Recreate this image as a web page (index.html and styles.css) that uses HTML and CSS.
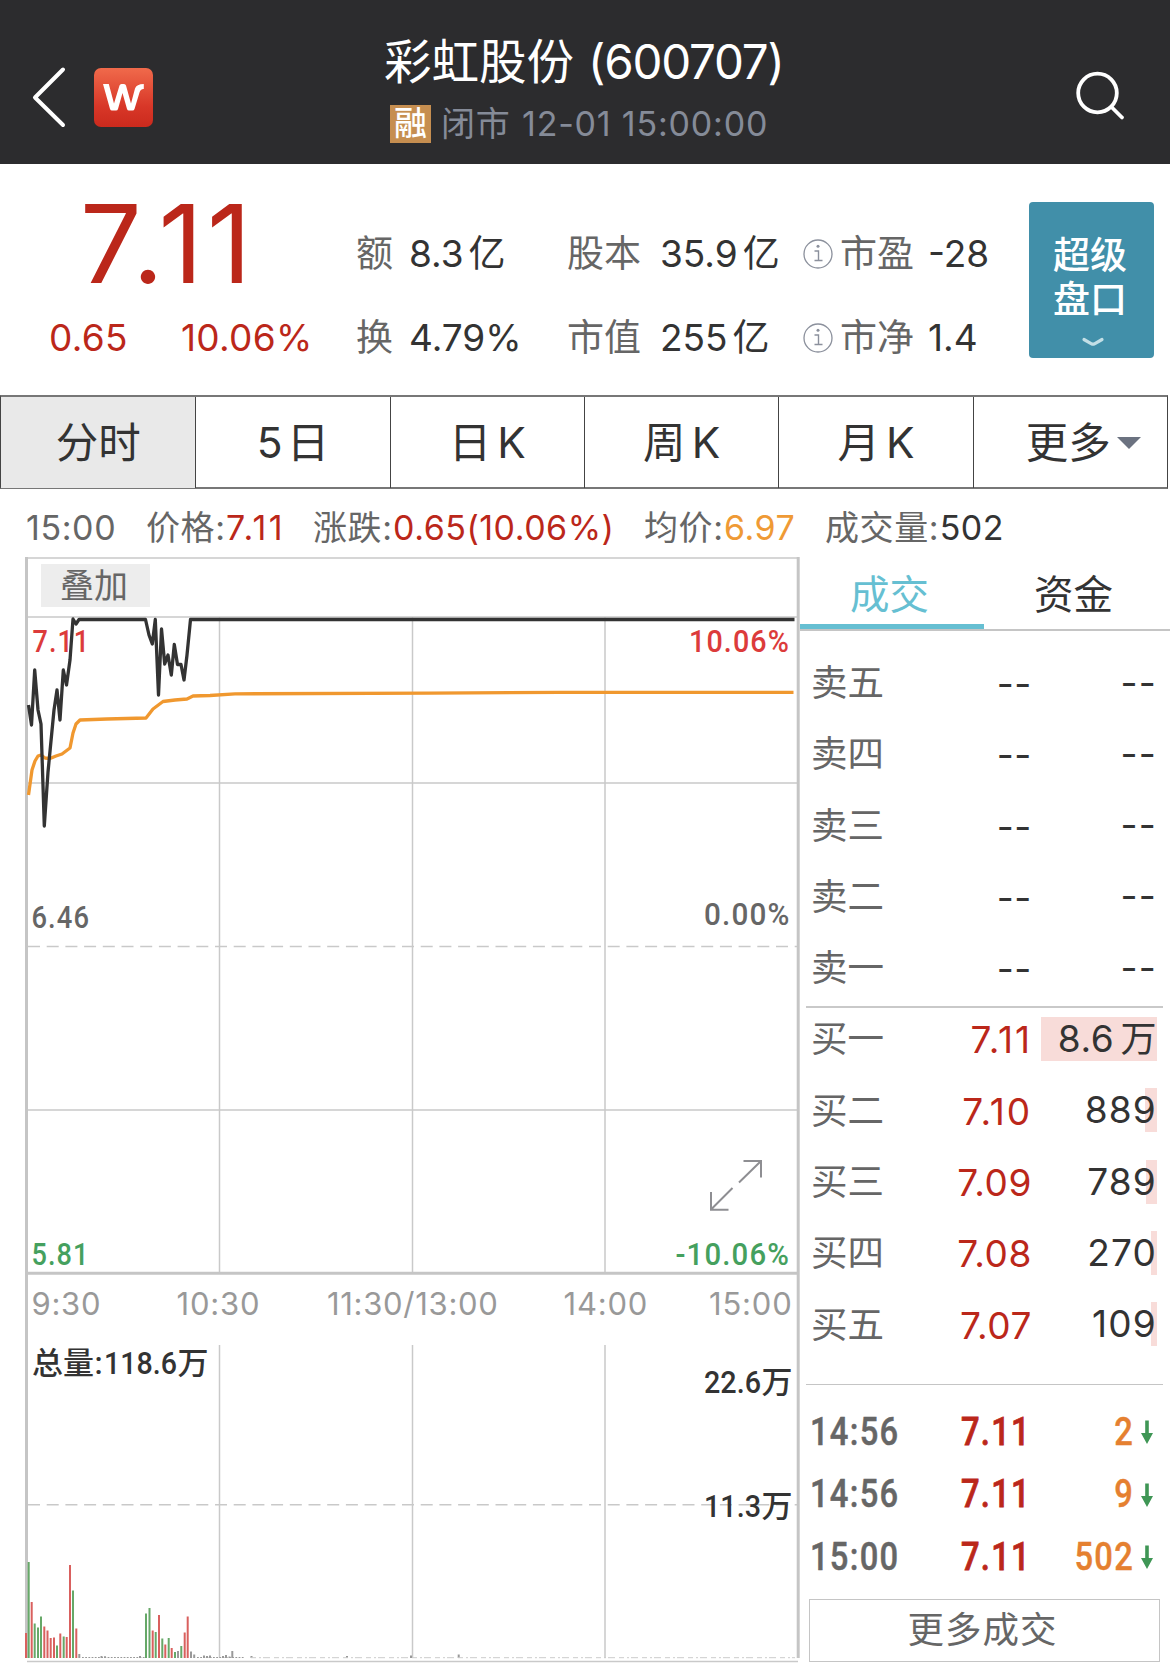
FILE: index.html
```html
<!DOCTYPE html>
<html lang="zh-CN">
<head>
<meta charset="utf-8">
<title>彩虹股份 (600707)</title>
<link rel="stylesheet" href="styles.css">
</head>
<body>
<header class="topbar">
  <svg class="back" width="34" height="64" viewBox="0 0 34 64"><path d="M31 4.500L3 32.500L31 60" fill="none" stroke="#fff" stroke-width="4" stroke-linecap="round" stroke-linejoin="round"/></svg>
  <svg class="logo" width="59" height="59" viewBox="0 0 59 59">
    <defs><linearGradient id="lg" x1="0" y1="0" x2="0" y2="1"><stop offset="0" stop-color="#f06a4b"/><stop offset=".65" stop-color="#d83728"/><stop offset="1" stop-color="#cb2a1d"/></linearGradient></defs>
    <rect width="59" height="59" rx="7" fill="url(#lg)"/>
    <path fill="#fff" d="M9 16H14.800L20 35.500L25.500 17.500Q26 16 27.500 16H30Q31.500 16 32 17.500L37 35.500L41 20.500Q42.500 16 49.800 16V21Q46.500 20.800 45.500 24.500L40.500 41Q40 42.500 38.500 42.500H35Q33.500 42.500 33 41L28.500 25L24 41Q23.500 42.500 22 42.500H18Q16.500 42.500 16 41Z"/>
  </svg>
  <div class="heading">
    <h1 class="stock">彩虹股份<span class="code">(600707)</span></h1>
    <div class="status"><span class="badge">融</span><span class="market">闭市</span><span>12-01 15:00:00</span></div>
  </div>
  <svg class="search" width="50" height="50" viewBox="0 0 50 50"><g fill="none" stroke="#fff" stroke-width="3.800" stroke-linecap="round"><circle cx="21.500" cy="22" r="19.300"/><path d="M35.500 36L46 46.500"/></g></svg>
</header>

<section class="quote">
  <div class="last">
    <div class="price">7.11</div>
    <div class="change"><span>0.65</span><span>10.06%</span></div>
  </div>
  <dl class="facts">
    <dt>额</dt><dd>8.3<i>亿</i></dd>
    <dt>股本</dt><dd>35.9<i>亿</i></dd>
    <dt class="info"><svg width="30" height="30" viewBox="0 0 30 30"><circle cx="15" cy="15" r="14" fill="none" stroke="#8b909c" stroke-width="1.300"/><path d="M11.500 12H15.500V21.500M11.500 21.500H19.500" fill="none" stroke="#8b909c" stroke-width="1.400"/><circle cx="15" cy="7.300" r="1.500" fill="#8b909c"/></svg>市盈</dt><dd>-28</dd>
    <dt>换</dt><dd>4.79%</dd>
    <dt>市值</dt><dd>255<i>亿</i></dd>
    <dt class="info"><svg width="30" height="30" viewBox="0 0 30 30"><circle cx="15" cy="15" r="14" fill="none" stroke="#8b909c" stroke-width="1.300"/><path d="M11.500 12H15.500V21.500M11.500 21.500H19.500" fill="none" stroke="#8b909c" stroke-width="1.400"/><circle cx="15" cy="7.300" r="1.500" fill="#8b909c"/></svg>市净</dt><dd>1.4</dd>
  </dl>
  <button class="panel">超级<br>盘口<svg width="24" height="12" viewBox="0 0 24 12"><path d="M3 2.500L10.500 6.800Q12 7.500 13.500 6.800L21 2.500" fill="none" stroke="#c3dfe6" stroke-width="3.200" stroke-linecap="round"/></svg></button>
</section>

<nav class="periods">
  <a class="active">分时</a><a>5<i>日</i></a><a>日<b>K</b></a><a>周<b>K</b></a><a>月<b>K</b></a><a class="more">更多<span class="caret"></span></a>
</nav>

<div class="readout">
  <span>15:00</span>
  <span>价格:<em class="up wide">7.11</em></span>
  <span>涨跌:<em class="up">0.65(10.06%)</em></span>
  <span>均价:<em class="avg">6.97</em></span>
  <span>成交量:<em class="vol">502</em></span>
</div>

<main class="board">
  <svg class="chart" width="800" height="1121" viewBox="0 557 800 1121">
    <g class="grid">
      <path d="M28 558H797M28 617H797M28 783H797M28 1110H797"/>
      <path d="M219.500 617V1272M412.500 617V1272M605 617V1272M219.500 1345V1658M412.500 1345V1658M605 1345V1658"/>
      <path d="M28 946.500H797M28 1504.700H797" stroke-dasharray="12 6.700"/>
      <path d="M27 1661.500H798" />
    </g>
    <g class="frame"><path d="M26.500 557V1658M798.200 557V1658M28 1273.300H797"/></g>
    <rect x="41" y="564" width="109" height="43" fill="#ededed"/>
    <text class="overlay" x="60" y="598">叠加</text>

    <g class="din">
      <text class="rise" x="32.500" y="652" textLength="57.700" lengthAdjust="spacingAndGlyphs">7.11</text>
      <text class="rise" x="689" y="652" textLength="101" lengthAdjust="spacingAndGlyphs">10.06%</text>
      <text class="flat" x="31.500" y="928" textLength="58.500" lengthAdjust="spacingAndGlyphs">6.46</text>
      <text class="flat" x="704" y="925" textLength="86.500" lengthAdjust="spacingAndGlyphs">0.00%</text>
      <text class="fall" x="31.500" y="1265" textLength="58" lengthAdjust="spacingAndGlyphs">5.81</text>
      <text class="fall" x="675.500" y="1265" textLength="114.500" lengthAdjust="spacingAndGlyphs">-10.06%</text>
    </g>
    <path class="mean" d="M28.500 795L32 770L35 761L38 756L41 755L45 758L50 758.500L56 756L62 754L70 748L73 733L76 724L80 720L107 719L146 718L153 709L163 701.500L175 700L187 699L193 696L210 695.500L235 693.800L430 693.200L560 692.400H793.500"/>
    <path class="trace" d="M28.500 705L31.500 725L34.700 670L38 710L41 724L44.300 826L48 772L54 710L57 690L60 720L63.300 670L66.500 685L70 660L73 619L76 624L79 619.500H145.500L149 635L152.300 644L155.300 619.500L158.500 695L161.500 629L164.700 664L168 655L171.300 675L174.300 644.500L177.500 664.500H181L184 680L187 655L190.500 619.500H794.500"/>
    <path class="expand" d="M739 1182.500L761 1161M743.500 1161H761V1177.500M732.500 1188L711 1209.500M711 1192V1209.800H728.500"/>

    <g class="clock">
      <text x="31.500" y="1315" letter-spacing=".7">9:30</text>
      <text x="176.500" y="1315" letter-spacing=".8">10:30</text>
      <text x="327" y="1315" letter-spacing=".7">11:30/13:00</text>
      <text x="563.500" y="1315" letter-spacing=".8">14:00</text>
      <text x="709" y="1315" letter-spacing=".8">15:00</text>
    </g>
    <g class="amount">
      <text x="32" y="1373.500">总量<tspan x="94.500">:</tspan><tspan x="104" textLength="73" lengthAdjust="spacingAndGlyphs">118.6</tspan><tspan x="177.500">万</tspan></text>
      <text x="704" y="1393"><tspan textLength="57" lengthAdjust="spacingAndGlyphs">22.6</tspan><tspan x="761.500">万</tspan></text>
      <text x="704" y="1517"><tspan textLength="57" lengthAdjust="spacingAndGlyphs">11.3</tspan><tspan x="761.500">万</tspan></text>
    </g>
    <g class="bars">
      <path class="r" d="M26 1658V1633M31.700 1658V1602M44.300 1658V1626.500M47.500 1658V1630.500M50.700 1658V1638M54 1658V1637.500M60.300 1658V1633.500M66.700 1658V1637M70 1658V1565M76.300 1658V1628.500M152.700 1658V1630.500M159 1658V1615M165.300 1658V1644.500M171.700 1658V1648M184.700 1658V1632.500M187.700 1658V1616.500"/>
      <path class="g" d="M28.700 1658V1562M34.700 1658V1623.500M38 1658V1627.500M41 1658V1616.500M57 1658V1645.500M63.700 1658V1636.500M73 1658V1590.500M146 1658V1613.500M149.500 1658V1608M155.700 1658V1632M162.300 1658V1638.500M168.700 1658V1638M175 1658V1652M181.300 1658V1646"/>
      <path class="n" d="M79.300 1658V1654M178 1658V1651M191 1658V1651.500M194.200 1658V1654.500M232.300 1658V1651M101.500 1658V1656M105 1658V1656.300M140 1658V1656M204 1658V1655.500M207 1658V1656M210 1658V1655.500M223 1658V1656M226 1658V1655M229.500 1658V1656.500M251.500 1658V1656M347 1658V1656M411 1658V1655.500M458.700 1658V1654.500"/>
      <path class="n thin" d="M82 1657.500H145M197 1657.500H245" stroke-dasharray="1.800 1.400"/>
      <path class="n faint" d="M251 1657.700H795" stroke-dasharray="5 3 2 2 7 4"/>
    </g>
  </svg>

  <aside class="depth">
    <div class="switch"><a class="on">成交</a><a>资金</a></div>
    <ul class="book asks">
      <li><span>卖五</span><b>--</b><em>--</em></li>
      <li><span>卖四</span><b>--</b><em>--</em></li>
      <li><span>卖三</span><b>--</b><em>--</em></li>
      <li><span>卖二</span><b>--</b><em>--</em></li>
      <li><span>卖一</span><b>--</b><em>--</em></li>
    </ul>
    <ul class="book bids">
      <li><span>买一</span><b class="loose">7.11</b><em class="wan">8.6<i>万</i><u style="width:116px"></u></em></li>
      <li><span>买二</span><b class="loose">7.10</b><em>889<u style="width:12px"></u></em></li>
      <li><span>买三</span><b>7.09</b><em>789<u style="width:11px"></u></em></li>
      <li><span>买四</span><b>7.08</b><em>270<u style="width:6px"></u></em></li>
      <li><span>买五</span><b>7.07</b><em>109<u style="width:6px"></u></em></li>
    </ul>
    <ul class="ticks">
      <li><span>14:56</span><b>7.11</b><em>2</em><svg width="12" height="24" viewBox="0 0 12 24"><path d="M4.200 0.500H7.800V13H12L6 24L0 13H4.200Z" fill="#3f9655"/></svg></li>
      <li><span>14:56</span><b>7.11</b><em>9</em><svg width="12" height="24" viewBox="0 0 12 24"><path d="M4.200 0.500H7.800V13H12L6 24L0 13H4.200Z" fill="#3f9655"/></svg></li>
      <li><span>15:00</span><b>7.11</b><em>502</em><svg width="12" height="24" viewBox="0 0 12 24"><path d="M4.200 0.500H7.800V13H12L6 24L0 13H4.200Z" fill="#3f9655"/></svg></li>
    </ul>
    <button class="all">更多成交</button>
  </aside>
</main>
</body>
</html>
```
FILE: styles.css
```css
* { box-sizing: border-box; margin: 0; padding: 0; }
html, body { width: 1170px; height: 1678px; overflow: hidden; }
body {
  background: #fff;
  color: #333;
  font-family: Inter, "Noto Sans CJK SC", sans-serif;
  font-size: 37px;
}
ul { list-style: none; }
i, em { font-style: normal; }
b, h1 { font-weight: 400; }
button { border: 0; font: inherit; }
svg { display: block; flex: none; }

/* header */
.topbar { display: flex; height: 164px; background: #2c2c2e; color: #fff; }
.back { margin: 65px 0 0 32px; }
.logo { margin: 68px 0 0 28px; }
.heading { margin-left: 231px; padding-top: 32px; width: 500px; }
.stock { font-size: 47.500px; line-height: 60px; white-space: nowrap; }
.code { margin-left: 14px; letter-spacing: -1.200px; }
.status { display: flex; align-items: center; height: 38px; margin: 13px 0 0 6px; color: #858b98; font-size: 34px; line-height: 38px; letter-spacing: .8px; white-space: nowrap; }
.badge { width: 41px; height: 38px; background: #c68e50; color: #fff; font-size: 33px; font-weight: 500; text-align: center; letter-spacing: 0; line-height: 36px; }
.market { width: 80px; padding-left: 10px; margin-right: 11px; font-size: 34px; }
.search { margin: 71px 0 0 192px; }

/* quote */
.quote { display: flex; height: 231px; color: #333; }
.last { width: 356px; color: #bb271a; }
.price { margin: 24px 0 0 80px; font-size: 109px; line-height: 110px; letter-spacing: 4.200px; }
.change { display: flex; margin-top: 20px; padding-left: 49px; line-height: 40px; letter-spacing: .3px; }
.change span:first-child { width: 132px; }
.facts {
  display: grid;
  grid-template-columns: 53px 158px 93px 143px 125px 101px;
  grid-auto-rows: 84px;
  width: 673px;
  padding-top: 48px;
  line-height: 84px;
  white-space: nowrap;
}
.facts dt { color: #666; font-size: 37px; }
.facts i { margin-left: 5px; font-size: 37px; }
.info { display: flex; align-items: center; gap: 7px; }
.panel { width: 125px; height: 156px; margin-top: 38px; padding: 22px 3px 0 0; border-radius: 4px; background: #418fa9; color: #fff; font-size: 37px; font-weight: 500; line-height: 44px; text-align: center; }
.panel svg { margin: 15px auto 0 52px; }

/* periods */
.periods { display: grid; grid-template-columns: repeat(6, 1fr); width: 1168px; height: 94px; border: 1px solid #555; border-width: 2px 1px; border-color: #777 #444; font-size: 42.500px; line-height: 91px; text-align: center; }
.periods a + a { border-left: 1px solid #444; }
.periods .active { background: #e9e9e9; }
.periods i { margin-left: 4px; }
.periods b { margin-left: 6px; }
.more { display: flex; align-items: center; padding-left: 52px; }
.caret { margin: 0 0 0 6px; border: 12px solid transparent; border-top-color: #6b7280; border-bottom: 0; }

/* readout */
.readout { display: grid; grid-template-columns: 120px 167px 331px 181px 1fr; height: 68px; padding-left: 26px; color: #666; font-size: 34px; line-height: 78px; letter-spacing: .6px; white-space: nowrap; }
.up { color: #bb271a; }
.readout em { margin-left: .5px; letter-spacing: .5px; }
.readout .wide { letter-spacing: 2.300px; }
.avg { color: #ef9a35; }
.vol { color: #333; }

/* chart */
.board { display: flex; height: 1121px; }
.grid path { fill: none; stroke: #c9c9c9; stroke-width: 1.500; }
.frame path { fill: none; stroke: #c5c5c5; stroke-width: 3; }
.overlay { font-size: 34px; fill: #666; }
.din { font: 500 31px Roboto, sans-serif; font-kerning: none; letter-spacing: 1.200px; }
.rise { fill: #dc3b3b; }
.flat { fill: #666; }
.fall { fill: #45a05e; }
.mean { fill: none; stroke: #f0982f; stroke-width: 3.300; stroke-linejoin: round; }
.trace { fill: none; stroke: #333; stroke-width: 3.300; stroke-linejoin: round; }
.expand { fill: none; stroke: #8e8e92; stroke-width: 2; }
.clock { font-size: 31px; fill: #999; }
.amount { font: 500 31px Roboto, "Noto Sans CJK SC", sans-serif; font-kerning: none; fill: #333; }
.bars path { fill: none; stroke-width: 2; }
.bars .r { stroke: #d9605e; }
.bars .g { stroke: #66a868; }
.bars .n { stroke: #999; }
.bars .thin { stroke-width: 1; }
.bars .faint { stroke: #ccc; stroke-width: 1; }

/* depth */
.depth { display: flex; flex-direction: column; width: 370px; }
.switch { display: grid; grid-template-columns: 1fr 1fr; height: 74px; padding-right: 2px; border-bottom: 2px solid #c5c5c5; font-size: 39.500px; line-height: 76px; text-align: center; }
.switch a { height: 72px; padding-right: 5px; }
.switch .on { color: #66bfd2; border-bottom: 5px solid #66bfd2; }
.book li { display: flex; height: 71.300px; padding-left: 11px; line-height: 71.300px; }
.book span { width: 101px; color: #666; font-size: 36.500px; }
.book b { width: 120px; text-align: right; letter-spacing: .6px; }
.book em { position: relative; z-index: 0; width: 125px; text-align: right; letter-spacing: 1.200px; margin-top: -1.500px; }
.book u { position: absolute; z-index: -1; right: 0; top: 14px; height: 44px; background: #f8dcd9; }
.asks { position: relative; margin-top: 17px; }
.asks::after { content: ""; position: absolute; left: 6px; top: 358px; width: 357px; height: 2px; background: #c9c9c9; }
.bids b { color: #bb271a; }
.book b.loose { letter-spacing: 1.900px; }
.bids .wan { letter-spacing: .6px; }
.bids .wan i { margin-left: 6px; font-size: 36px; }
.ticks { width: 357px; height: 206px; margin: 23px 0 0 6px; padding: 16px 0 0 6px; border-top: 1px solid #c5c5c5; font: 500 38px Roboto, sans-serif; font-kerning: none; letter-spacing: 1.500px; }
.ticks li { display: flex; align-items: center; height: 62.500px; line-height: 62.500px; }
.ticks span, .ticks b, .ticks em { transform: scaleX(.86); transform-origin: left; }
.ticks span { width: 151px; color: #666; margin-left: -2px; -webkit-text-stroke: .5px #666; }
.ticks b { width: 72px; color: #bb271a; font-weight: 500; -webkit-text-stroke: .8px #bb271a; }
.ticks em { width: 101px; color: #e58030; text-align: right; transform-origin: right; -webkit-text-stroke: .4px #e58030; }
.ticks svg { margin-left: 7px; }
.all { width: 351px; height: 63px; margin: 9px 0 0 9px; padding-right: 4px; border: 1.500px solid #c5c5c5; background: #fff; color: #666; font-size: 36.500px; line-height: 60px; letter-spacing: 1px; }
```
